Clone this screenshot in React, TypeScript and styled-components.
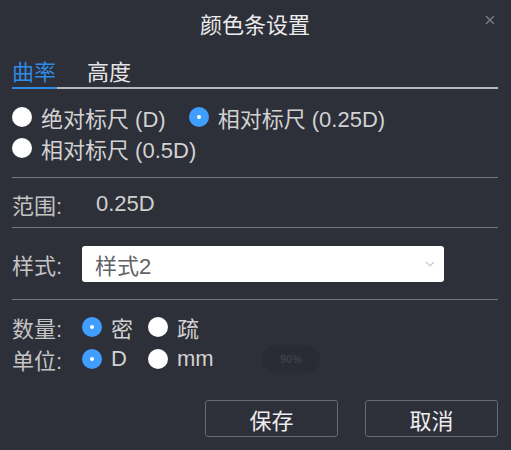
import React from "react";
import styled, { createGlobalStyle } from "styled-components";

const FONT = `"Liberation Sans", "Noto Sans CJK SC", sans-serif`;

const Global = createGlobalStyle`
  html, body { margin: 0; padding: 0; background: #2d2f39; }
  body { font-family: ${FONT}; }
`;

const Dialog = styled.div`
  position: relative;
  width: 511px;
  height: 450px;
  background: #2d2f39;
  box-sizing: border-box;
  padding: 0 13px 0 12px;
  color: #d6d6d6;
  font-family: ${FONT};
`;

const Header = styled.div`
  height: 46px;
  display: flex;
  align-items: center;
  justify-content: center;
  font-size: 22px;
  color: #ececec;
`;

const Close = styled.button`
  position: absolute;
  right: 16px;
  top: 15px;
  width: 10px;
  height: 10px;
  padding: 0;
  border: none;
  background: transparent;
  display: flex;
  cursor: pointer;
`;

const Tabs = styled.div`
  margin-top: 13px;
  display: flex;
  gap: 30px;
  border-bottom: 2px solid #b4b7be;
`;

const Tab = styled.div<{ $active?: boolean }>`
  font-size: 22px;
  line-height: 28px;
  padding: 0 1px 0 0;
  margin-bottom: -2px;
  color: ${(p) => (p.$active ? "#2f8be6" : "#e6e6e6")};
  border-bottom: 2px solid ${(p) => (p.$active ? "#2f8be6" : "transparent")};
`;

const Section = styled.div<{ $pt: number; $pb: number }>`
  padding-top: ${(p) => p.$pt}px;
  padding-bottom: ${(p) => p.$pb}px;
`;

const Divider = styled.div`
  height: 1px;
  background: #74767e;
`;

const OptionWrap = styled.div`
  display: flex;
  flex-wrap: wrap;
  column-gap: 23px;
  width: 420px;
`;

const Option = styled.label<{ $h: number; $w?: number }>`
  display: flex;
  align-items: center;
  height: ${(p) => p.$h}px;
  min-width: ${(p) => (p.$w ? `${p.$w}px` : "auto")};
  gap: 9px;
  font-size: 22px;
  color: #d2d2d2;
  white-space: nowrap;
`;

const Dot = styled.span<{ $on?: boolean }>`
  width: 20px;
  height: 20px;
  border-radius: 50%;
  flex: none;
  background: ${(p) => (p.$on ? "#409eff" : "#ffffff")};
  display: flex;
  align-items: center;
  justify-content: center;
  &::after {
    content: "";
    width: 4px;
    height: 4px;
    border-radius: 50%;
    background: ${(p) => (p.$on ? "#ffffff" : "transparent")};
  }
`;

const Row = styled.div<{ $h: number }>`
  display: flex;
  align-items: center;
  height: ${(p) => p.$h}px;
`;

const Label = styled.div`
  width: 70px;
  flex: none;
  font-size: 22px;
  color: #c4c4c4;
`;

const Value = styled.div`
  padding-left: 14px;
  font-size: 22px;
  color: #cfcfcf;
`;

const Select = styled.div`
  width: 362px;
  height: 36px;
  box-sizing: border-box;
  background: #ffffff;
  border-radius: 3px;
  display: flex;
  align-items: center;
  justify-content: space-between;
  padding: 0 8px 0 13px;
  font-size: 22px;
  color: #606266;
`;

const Choices = styled.div`
  display: flex;
`;

const Toast = styled.div`
  position: absolute;
  left: 262px;
  top: 345px;
  width: 58px;
  height: 28px;
  border-radius: 14px;
  background: #2a2c35;
  color: #3c3f4a;
  font-size: 11px;
  font-weight: bold;
  display: flex;
  align-items: center;
  justify-content: center;
`;

const Footer = styled.div`
  margin-top: 25px;
  display: flex;
  justify-content: flex-end;
  gap: 27px;
`;

const Button = styled.button`
  width: 133px;
  height: 37px;
  box-sizing: border-box;
  border: 1px solid #676a72;
  border-radius: 3px;
  background: transparent;
  color: #ededed;
  font-size: 22px;
  font-family: ${FONT};
  padding: 0;
`;

export default function App() {
  return (
    <>
      <Global />
      <Dialog>
        <Header>颜色条设置</Header>
        <Close aria-label="close">
          <svg width="10" height="10" viewBox="0 0 10 10">
            <path d="M1 1L9 9M9 1L1 9" stroke="#7e8088" strokeWidth="1.3" />
          </svg>
        </Close>
        <Tabs>
          <Tab $active>曲率</Tab>
          <Tab>高度</Tab>
        </Tabs>
        <Section $pt={12} $pb={14}>
          <OptionWrap>
            <Option $h={31}>
              <Dot />
              绝对标尺 (D)
            </Option>
            <Option $h={31}>
              <Dot $on />
              相对标尺 (0.25D)
            </Option>
            <Option $h={31}>
              <Dot />
              相对标尺 (0.5D)
            </Option>
          </OptionWrap>
        </Section>
        <Divider />
        <Section $pt={10} $pb={7}>
          <Row $h={32}>
            <Label>范围:</Label>
            <Value>0.25D</Value>
          </Row>
        </Section>
        <Divider />
        <Section $pt={18} $pb={17}>
          <Row $h={36}>
            <Label>样式:</Label>
            <Select>
              <span>样式2</span>
              <svg width="12" height="8" viewBox="0 0 12 8">
                <path d="M2 2L6 6L10 2" stroke="#c8cad0" strokeWidth="1.2" fill="none" />
              </svg>
            </Select>
          </Row>
        </Section>
        <Divider />
        <Section $pt={11} $pb={0}>
          <Row $h={32}>
            <Label>数量:</Label>
            <Choices>
              <Option $h={32} $w={66}>
                <Dot $on />密
              </Option>
              <Option $h={32}>
                <Dot />疏
              </Option>
            </Choices>
          </Row>
          <Row $h={32}>
            <Label>单位:</Label>
            <Choices>
              <Option $h={32} $w={66}>
                <Dot $on />D
              </Option>
              <Option $h={32}>
                <Dot />mm
              </Option>
            </Choices>
          </Row>
        </Section>
        <Toast>90%</Toast>
        <Footer>
          <Button>保存</Button>
          <Button>取消</Button>
        </Footer>
      </Dialog>
    </>
  );
}
